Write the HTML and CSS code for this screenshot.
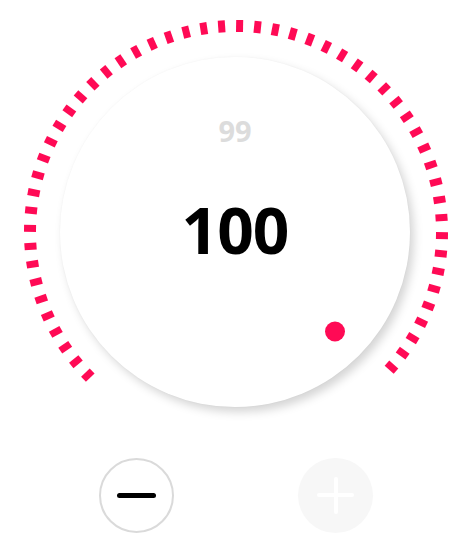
FILE: index.html
```html
<!DOCTYPE html>
<html>
<head>
<meta charset="utf-8">
<link rel="stylesheet" href="styles.css">
</head>
<body>
<main class="app">
  <section class="dial">
    <div class="knob">
      <div class="prev">99</div>
      <div class="value">100</div>
    </div>
    <svg class="ring" viewBox="0 0 424 424" width="424" height="424">
      <defs>
        <rect id="d" x="208.5" y="0" width="7" height="12" fill="#ff0a55"/>
      </defs>
      <use href="#d" transform="rotate(-134 212 212)"/>
      <use href="#d" transform="rotate(-129 212 212)"/>
      <use href="#d" transform="rotate(-124 212 212)"/>
      <use href="#d" transform="rotate(-119 212 212)"/>
      <use href="#d" transform="rotate(-114 212 212)"/>
      <use href="#d" transform="rotate(-109 212 212)"/>
      <use href="#d" transform="rotate(-104 212 212)"/>
      <use href="#d" transform="rotate(-99 212 212)"/>
      <use href="#d" transform="rotate(-94 212 212)"/>
      <use href="#d" transform="rotate(-89 212 212)"/>
      <use href="#d" transform="rotate(-84 212 212)"/>
      <use href="#d" transform="rotate(-79 212 212)"/>
      <use href="#d" transform="rotate(-74 212 212)"/>
      <use href="#d" transform="rotate(-69 212 212)"/>
      <use href="#d" transform="rotate(-64 212 212)"/>
      <use href="#d" transform="rotate(-59 212 212)"/>
      <use href="#d" transform="rotate(-54 212 212)"/>
      <use href="#d" transform="rotate(-49 212 212)"/>
      <use href="#d" transform="rotate(-44 212 212)"/>
      <use href="#d" transform="rotate(-39 212 212)"/>
      <use href="#d" transform="rotate(-34 212 212)"/>
      <use href="#d" transform="rotate(-29 212 212)"/>
      <use href="#d" transform="rotate(-24 212 212)"/>
      <use href="#d" transform="rotate(-19 212 212)"/>
      <use href="#d" transform="rotate(-14 212 212)"/>
      <use href="#d" transform="rotate(-9 212 212)"/>
      <use href="#d" transform="rotate(-4 212 212)"/>
      <use href="#d" transform="rotate(1 212 212)"/>
      <use href="#d" transform="rotate(6 212 212)"/>
      <use href="#d" transform="rotate(11 212 212)"/>
      <use href="#d" transform="rotate(16 212 212)"/>
      <use href="#d" transform="rotate(21 212 212)"/>
      <use href="#d" transform="rotate(26 212 212)"/>
      <use href="#d" transform="rotate(31 212 212)"/>
      <use href="#d" transform="rotate(36 212 212)"/>
      <use href="#d" transform="rotate(41 212 212)"/>
      <use href="#d" transform="rotate(46 212 212)"/>
      <use href="#d" transform="rotate(51 212 212)"/>
      <use href="#d" transform="rotate(56 212 212)"/>
      <use href="#d" transform="rotate(61 212 212)"/>
      <use href="#d" transform="rotate(66 212 212)"/>
      <use href="#d" transform="rotate(71 212 212)"/>
      <use href="#d" transform="rotate(76 212 212)"/>
      <use href="#d" transform="rotate(81 212 212)"/>
      <use href="#d" transform="rotate(86 212 212)"/>
      <use href="#d" transform="rotate(91 212 212)"/>
      <use href="#d" transform="rotate(96 212 212)"/>
      <use href="#d" transform="rotate(101 212 212)"/>
      <use href="#d" transform="rotate(106 212 212)"/>
      <use href="#d" transform="rotate(111 212 212)"/>
      <use href="#d" transform="rotate(116 212 212)"/>
      <use href="#d" transform="rotate(121 212 212)"/>
      <use href="#d" transform="rotate(126 212 212)"/>
      <use href="#d" transform="rotate(131 212 212)"/>
      <circle cx="311" cy="311.5" r="10" fill="#ff0a55"/>
    </svg>
  </section>
  <div class="controls">
    <button class="btn btn-minus" aria-label="decrease"><span class="bar"></span></button>
    <button class="btn btn-plus" aria-label="increase"><span class="bar"></span><span class="bar vert"></span></button>
  </div>
</main>
</body>
</html>
```
FILE: styles.css
```css
* { box-sizing: border-box; }
html, body {
  margin: 0;
  padding: 0;
  background: #ffffff;
}
body {
  width: 466px;
  height: 558px;
  overflow: hidden;
  font-family: "Open Sans", Roboto, "Liberation Sans", sans-serif;
}
.app {
  display: flex;
  flex-direction: column;
}
.dial {
  display: grid;
  width: 424px;
  height: 424px;
  margin: 19.5px 0 0 24px;
}
.knob, .ring {
  grid-area: 1 / 1;
}
.knob {
  place-self: center;
  width: 350px;
  height: 350px;
  margin: 0 2px 0 0;
  border-radius: 50%;
  background: #ffffff;
  box-shadow: 4px 5px 10px rgba(0, 0, 0, 0.17), 0 0 2px rgba(0, 0, 0, 0.04);
  display: flex;
  flex-direction: column;
  align-items: center;
  padding-top: 59px;
}
.ring {
  pointer-events: none;
  display: block;
}
.prev {
  font-size: 29px;
  line-height: 30px;
  font-weight: 700;
  color: #dcdcdc;
}
.value {
  margin-top: 51px;
  font-size: 64px;
  line-height: 66px;
  font-weight: 700;
  color: #000000;
  letter-spacing: -1px;
}
.controls {
  display: flex;
  gap: 124.5px;
  margin: 14px 0 0 98.5px;
}
.btn {
  width: 75px;
  height: 75px;
  border-radius: 50%;
  padding: 0;
  display: grid;
  place-items: center;
}
.btn .bar {
  grid-area: 1 / 1;
  display: block;
  border-radius: 3px;
}
.btn-minus {
  background: #ffffff;
  border: 2px solid #dadada;
}
.btn-minus .bar {
  width: 39px;
  height: 5px;
  background: #000000;
}
.btn-plus {
  background: #f7f7f7;
  border: none;
}
.btn-plus .bar {
  width: 37px;
  height: 4px;
  background: #ffffff;
}
.btn-plus .bar.vert {
  width: 4px;
  height: 37px;
}
```
